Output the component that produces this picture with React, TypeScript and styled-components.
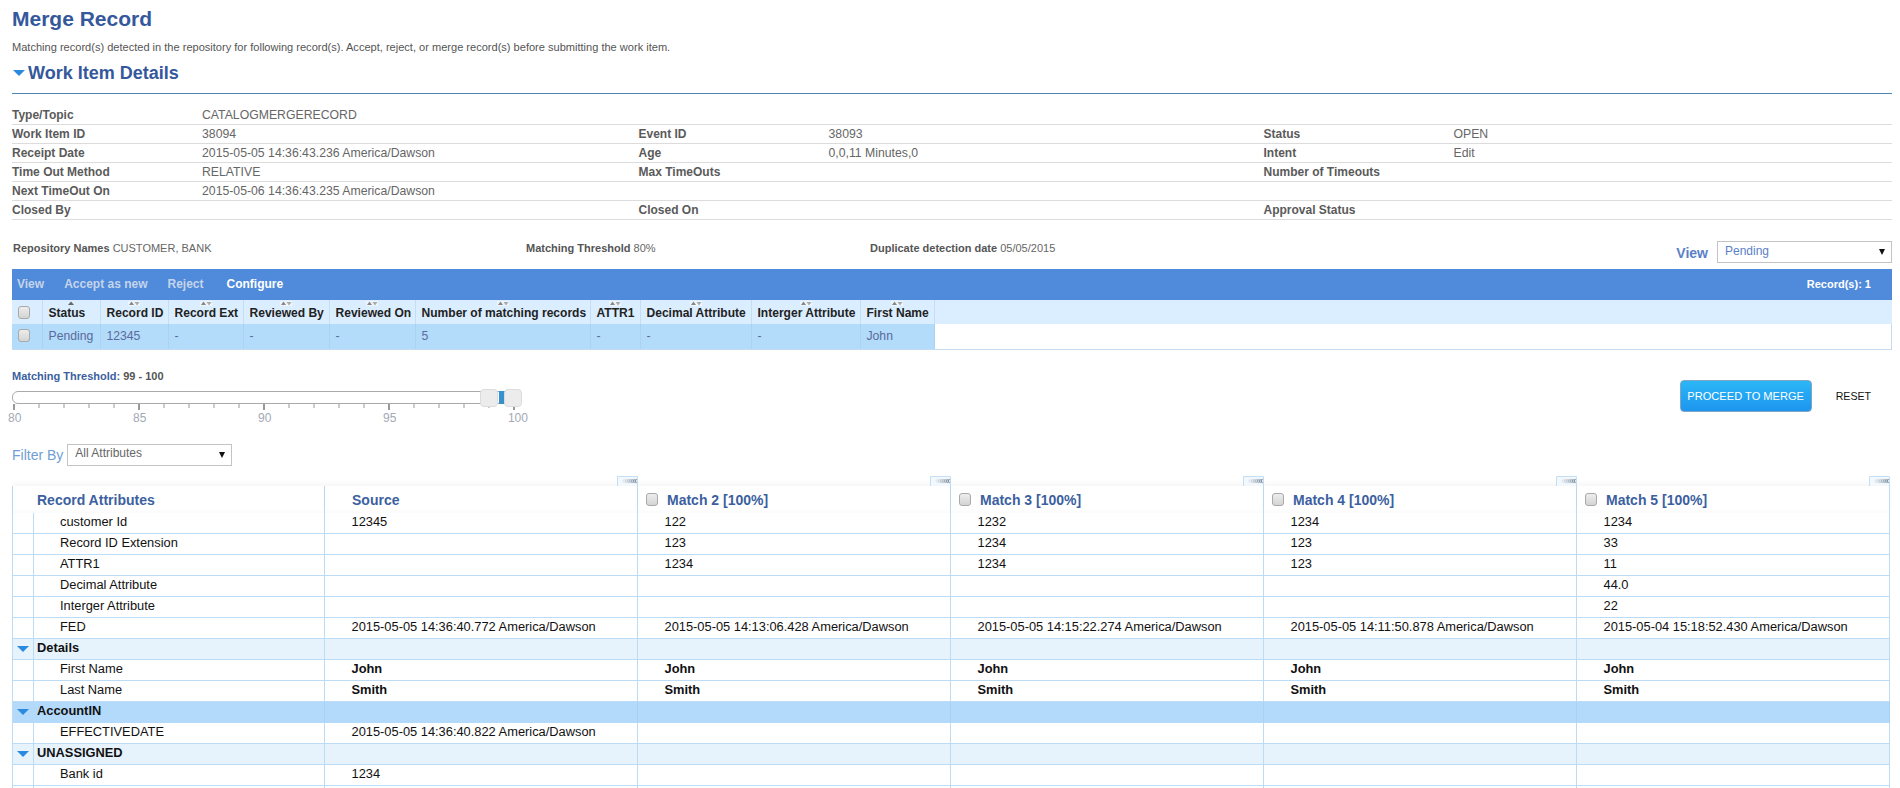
import React from "react";
import styled, { createGlobalStyle } from "styled-components";

const Global = createGlobalStyle`
  html, body { margin: 0; padding: 0; height: 788px; overflow: hidden; background: #fff; }
  body { font-family: "Liberation Sans", Arial, sans-serif; font-size: 12px; color: #555; }
  * { box-sizing: border-box; }
`;

const Page = styled.div`
  padding: 6px 8px 0 12px;
  width: 1900px;
`;
const Title = styled.h1`
  margin: 0;
  font-size: 21px;
  line-height: 26px;
  font-weight: 700;
  color: #34589b;
`;
const Intro = styled.p`
  margin: 8px 0 0;
  font-size: 11.05px;
  line-height: 14px;
  color: #555;
`;
const SectionHead = styled.h2`
  margin: 7px 0 0;
  display: flex;
  align-items: center;
  gap: 3px;
  height: 24px;
  font-size: 18px;
  font-weight: 700;
  color: #34589b;
  padding-left: 1px;
`;
const Rule = styled.div`
  margin-top: 8px;
  height: 1px;
  background: #4f86b8;
`;
const Details = styled.div`
  margin-top: 12px;
`;
const DetailRow = styled.div`
  display: grid;
  grid-template-columns: 190px 436.5px 190px 435px 190px 1fr;
  height: 19px;
  line-height: 18px;
  border-bottom: 1px solid #dcdcdc;
  font-size: 12.25px;
`;
const DLabel = styled.div`
  font-weight: 700;
  color: #5a5a5a;
  font-size: 12px;
`;
const DValue = styled.div`
  color: #666;
`;
const InfoRow = styled.div`
  margin-top: 21px;
  height: 22px;
  margin-bottom: 6px;
  display: grid;
  grid-template-columns: 513px 344px 1fr auto;
  padding-left: 1px;
  font-size: 11px;
  line-height: 14px;
  color: #666;
`;
const InfoItem = styled.div``;
const InfoKey = styled.b`
  color: #555;
`;
const ViewGroup = styled.div`
  display: flex;
  align-items: center;
  gap: 9px;
  height: 22px;
`;
const ViewLabel = styled.span`
  font-size: 14px;
  font-weight: 700;
  color: #5b80c8;
  padding-top: 2px;
`;
const Select = styled.div<{ $w: number; $color: string }>`
  width: ${(p) => p.$w}px;
  height: 22px;
  border: 1px solid #c4c4c4;
  display: flex;
  align-items: center;
  justify-content: space-between;
  padding: 0 6px 3px 7px;
  font-size: 12px;
  color: ${(p) => p.$color};
  background: #fff;
`;
const Toolbar = styled.div`
  height: 31px;
  background: #4f8adb;
  display: flex;
  align-items: center;
  padding: 0 21px 1px 5px;
  gap: 20px;
  font-size: 12px;
  font-weight: 700;
`;
const ToolItem = styled.span<{ $on?: boolean }>`
  color: ${(p) => (p.$on ? "#fff" : "#c5d4ea")};
  margin-left: ${(p) => (p.$on ? 3 : 0)}px;
`;
const RecordCount = styled.span`
  margin-left: auto;
  font-size: 11px;
  color: #fff;
`;
const TOP_COLS = "30.5px 58px 68px 75px 86px 86px 175px 50px 111px 109px 74px 1fr";
const TopHead = styled.div`
  display: grid;
  grid-template-columns: ${TOP_COLS};
  height: 24px;
  background: #dbeeff;
`;
const TopHeadCell = styled.div`
  position: relative;
  display: flex;
  align-items: center;
  padding: 1px 0 0 6px;
  font-size: 12.05px;
  font-weight: 700;
  color: #222;
  white-space: nowrap;
  border-right: 1px solid #c3dff6;
  &:last-child { border-right: 0; }
`;
const SortMark = styled.svg`
  position: absolute;
  top: 1px;
  left: 50%;
  margin-left: -6px;
`;
const TopBody = styled.div`
  display: grid;
  grid-template-columns: ${TOP_COLS};
  height: 25.5px;
  border-right: 1px solid #c5dcf0;
  border-bottom: 1px solid #c5dcf0;
`;
const TopCell = styled.div<{ $blank?: boolean }>`
  display: flex;
  align-items: center;
  padding: 0 0 1px 6px;
  font-size: 12.2px;
  color: #5a6a9c;
  background: ${(p) => (p.$blank ? "#fff" : "#b3dbfa")};
  border-right: 1px solid ${(p) => (p.$blank ? "transparent" : "#a9d2f3")};
`;
const Check = styled.input.attrs({ type: "checkbox" })`
  appearance: none;
  margin: 0;
  width: 12px;
  height: 13px;
  border: 1px solid #a9a9a9;
  border-radius: 3px;
  background: linear-gradient(#ededed, #d4d4d4);
  flex: none;
`;
const Controls = styled.div`
  display: flex;
  justify-content: space-between;
  align-items: flex-start;
  padding-top: 19px;
`;
const SliderBox = styled.div`
  width: 520px;
`;
const SliderCaption = styled.div`
  font-size: 11px;
  line-height: 14px;
  font-weight: 700;
  color: #3c5f9f;
`;
const SliderValue = styled.span`
  color: #555;
`;
const Track = styled.div`
  position: relative;
  margin-top: 8px;
  height: 13px;
  width: 510px;
  border: 1px solid #aaa;
  border-radius: 6px;
  background: #fff;
`;
const Thumb = styled.div<{ $x: number }>`
  position: absolute;
  top: -3px;
  left: ${(p) => p.$x}px;
  width: 18.5px;
  height: 18px;
  border: 1px solid #dcdcdc;
  border-radius: 4px;
  background: #ececec;
`;
const Range = styled.div`
  position: absolute;
  left: 485.5px;
  top: -1px;
  width: 6px;
  height: 13px;
  background: linear-gradient(#2f95d6, #3a8ec8);
`;
const Ticks = styled.svg`
  display: block;
`;
const ScaleLabels = styled.div`
  display: flex;
  justify-content: space-between;
  width: 520px;
  margin: 0 0 0 -4px;
  font-size: 12px;
  line-height: 16px;
  color: #a3a9b5;
`;
const Actions = styled.div`
  display: flex;
  align-items: center;
  gap: 24px;
  padding: 11px 21px 0 0;
`;
const Primary = styled.button`
  width: 132px;
  height: 32px;
  padding: 0;
  border: 1px solid #7fa7c4;
  border-radius: 4px;
  background: linear-gradient(#2bb6f6, #1d95ef);
  color: #fff;
  font: 400 11.1px "Liberation Sans", Arial, sans-serif;
`;
const Reset = styled.button`
  border: 0;
  padding: 0;
  background: none;
  color: #111;
  font: 400 10.6px "Liberation Sans", Arial, sans-serif;
`;
const FilterRow = styled.div`
  margin-top: 18px;
  height: 22px;
  display: flex;
  align-items: center;
  gap: 4px;
`;
const FilterLabel = styled.span`
  font-size: 14px;
  color: #6f9ed4;
  padding-top: 1px;
`;
const Matrix = styled.div`
  margin-top: 20px;
  width: 1878px;
  border-left: 1px solid #bcdcf5;
  font-size: 12.85px;
  color: #111;
`;
const COLS = "21px 291px repeat(5, 313px)";
const MatrixHead = styled.div`
  position: relative;
  display: grid;
  grid-template-columns: 312px repeat(5, 313px);
  height: 27px;
  z-index: 1;
`;
const HeadCell = styled.div`
  position: relative;
  display: flex;
  align-items: flex-start;
  gap: 9px;
  background: #fff;
  height: 27px;
  padding: 7px 0 0 8px;
  font-size: 14px;
  line-height: 15px;
  font-weight: 700;
  color: #3c5f9f;
  border-right: 1px solid #bcdcf5;
  box-shadow: 0 -3px 5px rgba(0, 0, 0, 0.035), inset 0 -6px 5px -5px rgba(0, 0, 0, 0.03);
`;
const NameHead = styled(HeadCell)`
  padding-left: 24px;
`;
const SourceHead = styled(HeadCell)`
  padding-left: 27px;
`;
const Grip = styled.svg`
  position: absolute;
  right: -1px;
  top: -10px;
`;
const Row = styled.div<{ $tone?: "group" | "strong" }>`
  display: grid;
  grid-template-columns: ${COLS};
  height: 21px;
  border-bottom: 1px solid ${(p) => (p.$tone === "strong" ? "#b3dafb" : "#bcdcf5")};
  background: ${(p) => (p.$tone === "strong" ? "#b3dafb" : p.$tone === "group" ? "#e6f3fd" : "#fff")};
`;
const Cell = styled.div<{ $bold?: boolean; $first?: boolean; $strong?: boolean }>`
  display: flex;
  align-items: center;
  padding: 0 0 2px ${(p) => (p.$first ? 26 : 26.5)}px;
  white-space: nowrap;
  font-weight: ${(p) => (p.$bold ? 700 : 400)};
  border-right: 1px solid ${(p) => (p.$strong ? "#a6d2f6" : "#bcdcf5")};
`;
const Gutter = styled.div<{ $strong?: boolean }>`
  display: flex;
  align-items: center;
  justify-content: center;
  padding-top: 1px;
  border-right: 1px solid ${(p) => (p.$strong ? "#b3dafb" : "#bcdcf5")};
`;
const GroupName = styled(Cell)`
  padding-left: 3px;
  font-weight: 700;
  color: #111;
`;

const Arrow = ({ w = 12, h = 6 }: { w?: number; h?: number }) => (
  <svg width={w} height={h} viewBox="0 0 12 6" aria-hidden="true">
    <path d="M0 0H12L6 6Z" fill="#2a8ae0" />
  </svg>
);
const Caret = () => (
  <svg width="6" height="6" viewBox="0 0 6 6" aria-hidden="true" style={{ marginTop: 3 }}>
    <path d="M0 0H6L3 6Z" fill="#111" />
  </svg>
);
const Sort = ({ only }: { only?: boolean }) =>
  only ? (
    <SortMark width="12" height="5" viewBox="0 0 12 5" aria-hidden="true">
      <path d="M6 0.5L9 4H3Z" fill="#666" />
    </SortMark>
  ) : (
    <SortMark width="12" height="5" viewBox="0 0 12 5" aria-hidden="true">
      <rect width="12" height="5" fill="#eef6fd" />
      <path d="M3.5 0.5L6 4H1Z" fill="#888" />
      <path d="M6.5 1H11.5L9 4.5Z" fill="#aaa" />
    </SortMark>
  );
const GripIcon = () => (
  <Grip width="21" height="10" viewBox="0 0 21 10" aria-hidden="true">
    <path d="M0.5 10V0.5H20.5V10" fill="#f3f8fd" stroke="#c3def5" />
    {[6, 8, 10, 12, 14, 16, 18].map((x, i) => (
      <path key={x} d={`M${x + 1.5} 3L${x} 5L${x + 1.5} 7`} fill="none" stroke="#5f7486" strokeWidth="1.2" strokeOpacity={0.12 + i * 0.12} />
    ))}
  </Grip>
);

const ticks = Array.from({ length: 21 }, (_, i) => i);

const detailRows: string[][] = [
  ["Type/Topic", "CATALOGMERGERECORD", "", "", "", ""],
  ["Work Item ID", "38094", "Event ID", "38093", "Status", "OPEN"],
  ["Receipt Date", "2015-05-05 14:36:43.236 America/Dawson", "Age", "0,0,11 Minutes,0", "Intent", "Edit"],
  ["Time Out Method", "RELATIVE", "Max TimeOuts", "", "Number of Timeouts", ""],
  ["Next TimeOut On", "2015-05-06 14:36:43.235 America/Dawson", "", "", "", ""],
  ["Closed By", "", "Closed On", "", "Approval Status", ""],
];

const topHeads = ["Status", "Record ID", "Record Ext", "Reviewed By", "Reviewed On", "Number of matching records", "ATTR1", "Decimal Attribute", "Interger Attribute", "First Name"];
const topValues = ["Pending", "12345", "-", "-", "-", "5", "-", "-", "-", "John"];

type RowData =
  | { kind: "attr"; label: string; values: string[]; bold?: boolean }
  | { kind: "group"; label: string; strong?: boolean };

const matrix: RowData[] = [
  { kind: "attr", label: "customer Id", values: ["12345", "122", "1232", "1234", "1234"] },
  { kind: "attr", label: "Record ID Extension", values: ["", "123", "1234", "123", "33"] },
  { kind: "attr", label: "ATTR1", values: ["", "1234", "1234", "123", "11"] },
  { kind: "attr", label: "Decimal Attribute", values: ["", "", "", "", "44.0"] },
  { kind: "attr", label: "Interger Attribute", values: ["", "", "", "", "22"] },
  {
    kind: "attr",
    label: "FED",
    values: [
      "2015-05-05 14:36:40.772 America/Dawson",
      "2015-05-05 14:13:06.428 America/Dawson",
      "2015-05-05 14:15:22.274 America/Dawson",
      "2015-05-05 14:11:50.878 America/Dawson",
      "2015-05-04 15:18:52.430 America/Dawson",
    ],
  },
  { kind: "group", label: "Details" },
  { kind: "attr", label: "First Name", values: ["John", "John", "John", "John", "John"], bold: true },
  { kind: "attr", label: "Last Name", values: ["Smith", "Smith", "Smith", "Smith", "Smith"], bold: true },
  { kind: "group", label: "AccountIN", strong: true },
  { kind: "attr", label: "EFFECTIVEDATE", values: ["2015-05-05 14:36:40.822 America/Dawson", "", "", "", ""] },
  { kind: "group", label: "UNASSIGNED" },
  { kind: "attr", label: "Bank id", values: ["1234", "", "", "", ""] },
  { kind: "attr", label: "", values: ["", "", "", "", ""] },
];

export default function App() {
  return (
    <Page>
      <Global />
      <Title>Merge Record</Title>
      <Intro>Matching record(s) detected in the repository for following record(s). Accept, reject, or merge record(s) before submitting the work item.</Intro>
      <SectionHead>
        <Arrow />
        Work Item Details
      </SectionHead>
      <Rule />
      <Details>
        {detailRows.map((r) => (
          <DetailRow key={r[0]}>
            {r.map((t, i) => (i % 2 === 0 ? <DLabel key={i}>{t}</DLabel> : <DValue key={i}>{t}</DValue>))}
          </DetailRow>
        ))}
      </Details>
      <InfoRow>
        <InfoItem><InfoKey>Repository Names</InfoKey> CUSTOMER, BANK</InfoItem>
        <InfoItem><InfoKey>Matching Threshold</InfoKey> 80%</InfoItem>
        <InfoItem><InfoKey>Duplicate detection date</InfoKey> 05/05/2015</InfoItem>
        <ViewGroup>
          <ViewLabel>View</ViewLabel>
          <Select $w={175} $color="#5b80c8">Pending<Caret /></Select>
        </ViewGroup>
      </InfoRow>
      <Toolbar>
        <ToolItem>View</ToolItem>
        <ToolItem>Accept as new</ToolItem>
        <ToolItem>Reject</ToolItem>
        <ToolItem $on>Configure</ToolItem>
        <RecordCount>Record(s): 1</RecordCount>
      </Toolbar>
      <TopHead>
        <TopHeadCell><Check /></TopHeadCell>
        {topHeads.map((h, i) => (
          <TopHeadCell key={h}><Sort only={i === 0} />{h}</TopHeadCell>
        ))}
        <TopHeadCell />
      </TopHead>
      <TopBody>
        <TopCell><Check /></TopCell>
        {topValues.map((v, i) => <TopCell key={i}>{v}</TopCell>)}
        <TopCell $blank />
      </TopBody>
      <Controls>
        <SliderBox>
          <SliderCaption>Matching Threshold: <SliderValue>99 - 100</SliderValue></SliderCaption>
          <Track>
            <Thumb $x={466.5} />
            <Range />
            <Thumb $x={490.5} />
          </Track>
          <Ticks width="520" height="6" viewBox="0 0 520 6" aria-hidden="true">
            {ticks.map((i) => (
              <rect key={i} x={2 + i * 25 - (i % 5 === 0 ? 1 : 0.5)} y={0} width={i % 5 === 0 ? 2 : 1} height={i % 5 === 0 ? 6 : 4} fill="#999" />
            ))}
          </Ticks>
          <ScaleLabels>
            <span>80</span><span>85</span><span>90</span><span>95</span><span>100</span>
          </ScaleLabels>
        </SliderBox>
        <Actions>
          <Primary>PROCEED TO MERGE</Primary>
          <Reset>RESET</Reset>
        </Actions>
      </Controls>
      <FilterRow>
        <FilterLabel>Filter By</FilterLabel>
        <Select $w={165} $color="#666">All Attributes<Caret /></Select>
      </FilterRow>
      <Matrix>
        <MatrixHead>
          <NameHead>Record Attributes</NameHead>
          <SourceHead>Source<GripIcon /></SourceHead>
          {[2, 3, 4, 5].map((n) => (
            <HeadCell key={n}><Check />Match {n} [100%]<GripIcon /></HeadCell>
          ))}
        </MatrixHead>
        {matrix.map((r, idx) =>
          r.kind === "group" ? (
            <Row key={idx} $tone={r.strong ? "strong" : "group"}>
              <Gutter $strong={r.strong}><Arrow /></Gutter>
              <GroupName $strong={r.strong}>{r.label}</GroupName>
              {[0, 1, 2, 3, 4].map((c) => <Cell key={c} $strong={r.strong} />)}
            </Row>
          ) : (
            <Row key={idx}>
              <Gutter />
              <Cell $first>{r.label}</Cell>
              {r.values.map((v, c) => <Cell key={c} $bold={r.bold}>{v}</Cell>)}
            </Row>
          )
        )}
      </Matrix>
    </Page>
  );
}
